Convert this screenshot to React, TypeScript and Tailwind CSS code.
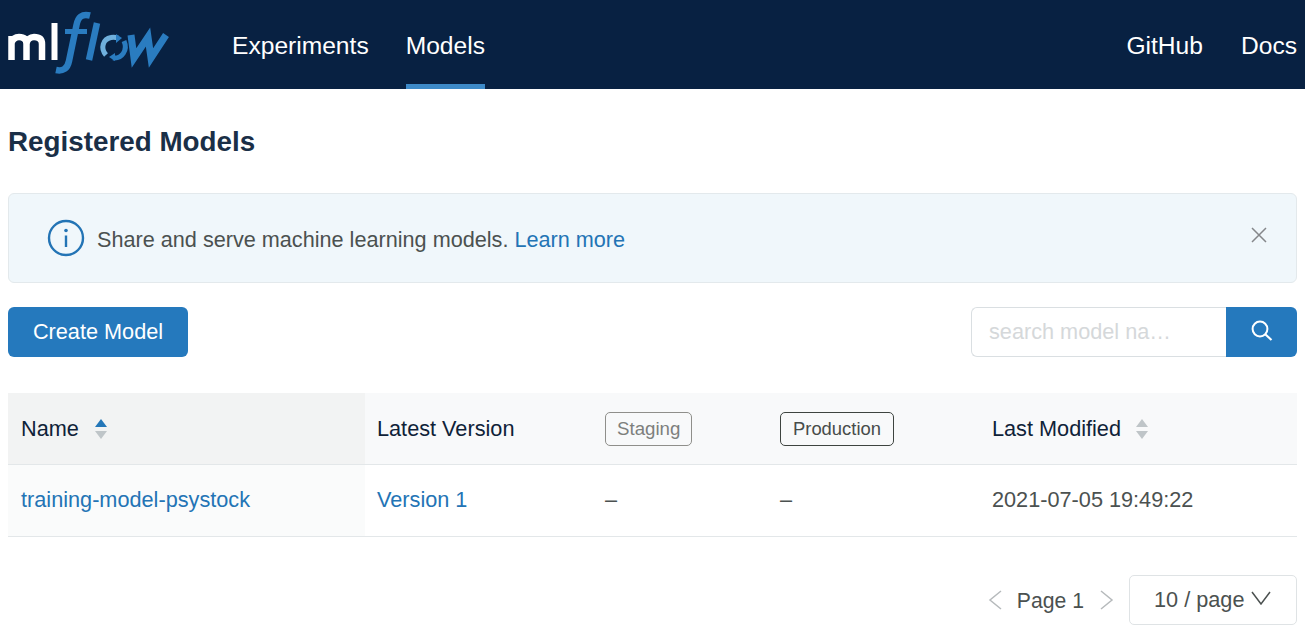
function Logo() {
  return (
    <svg width="172" height="80" viewBox="0 0 172 80" fill="none" className="block">
      {/* m */}
      <path d="M11.5 60V36M11.5 43C13 38.5 15.5 37 19 37C24 37 26.5 39.5 26.5 44V60M26.5 44C27 39.5 30.5 37 34 37C39.5 37 42 39.5 42 44V60" stroke="#fff" strokeWidth="6.5" />
      {/* l */}
      <path d="M54.5 23V60" stroke="#fff" strokeWidth="6" />
      {/* f */}
      <path d="M90 15.5C82 13.5 78 17 76.5 25L69 61C67.5 68.5 63 71.5 56 70" stroke="#2a7cc0" strokeWidth="6.5" />
      <path d="M65 31.5H87" stroke="#2a7cc0" strokeWidth="5" />
      {/* second l */}
      <path d="M97 23L89 60" stroke="#2a7cc0" strokeWidth="6.5" />
      {/* o */}
      <path d="M106 55C100 48 103 39 111 37.5C113 37 115 37 118 38" stroke="#6fb0dd" strokeWidth="5" />
      <path d="M116 34L122 38L116 43Z" fill="#2a7cc0" />
      <path d="M124 41C128 50 122 59 113 58" stroke="#2a7cc0" strokeWidth="5" />
      <path d="M115 53L109 57L115 61Z" fill="#2a7cc0" />
      {/* w */}
      <path d="M131 35L134 58L148 37L151 58L166 35" stroke="#2a7cc0" strokeWidth="7" />
    </svg>
  );
}

function SortArrows({ active }: { active?: boolean }) {
  return (
    <svg width="12" height="20" viewBox="0 0 12 20" className="block">
      <path d="M6 0L12 8H0Z" fill={active ? "#2477b8" : "#bfc5c8"} />
      <path d="M6 20L0 12H12Z" fill="#bfc5c8" />
    </svg>
  );
}

export default function App() {
  return (
    <div className="w-[1305px] h-[637px] overflow-hidden bg-white font-['Liberation_Sans',Arial,sans-serif] text-[21.7px] text-[#4b5150]">
      <header className="h-[89px] bg-[#082142] flex items-center pr-[8px]">
        <div className="w-[232px] h-[89px] shrink-0">
          <Logo />
        </div>
        <nav className="flex gap-[37px] h-full text-white text-[24.6px]">
          <a className="h-full flex items-center pt-[3px]">Experiments</a>
          <a className="h-full flex items-center pt-[8px] border-b-[5px] border-[#3d8ac8]">Models</a>
        </nav>
        <div className="ml-auto flex gap-[38px] text-white text-[24.6px] pt-[3px]">
          <a>GitHub</a>
          <a>Docs</a>
        </div>
      </header>

      <main className="px-[8px]">
        <h1 className="h-[104px] pt-[37px] text-[27.8px] leading-[32px] font-bold text-[#1a2f47]">Registered Models</h1>

        <div className="h-[90px] bg-[#f0f7fb] border border-[#e3e9ec] rounded-[6px] flex items-center pl-[38px] pr-[29px]">
          <svg width="38" height="38" viewBox="0 0 38 38" fill="none" className="shrink-0 mr-[12px]">
            <circle cx="19" cy="19" r="17" stroke="#2374b5" strokeWidth="2.4" />
            <circle cx="19" cy="11.5" r="1.8" fill="#2374b5" />
            <path d="M19 16.5V28" stroke="#2374b5" strokeWidth="2.4" />
          </svg>
          <span className="pt-[5px] text-[21.65px]">
            Share and serve machine learning models. <a className="text-[#2374b5]">Learn more</a>
          </span>
          <svg width="16" height="16" viewBox="0 0 16 16" fill="none" className="ml-auto mb-[6px]">
            <path d="M1 1L15 15M15 1L1 15" stroke="#85878a" strokeWidth="1.5" />
          </svg>
        </div>

        <div className="mt-[24px] h-[50px] flex items-center justify-between">
          <button className="w-[180px] h-[50px] rounded-[6px] bg-[#2579bd] text-white text-[21.7px]">Create Model</button>
          <div className="flex h-[50px]">
            <div className="w-[255px] border border-[#dadfe2] border-r-0 rounded-l-[6px] pl-[17px] flex items-center text-[#d5d8da]">
              search model na…
            </div>
            <div className="w-[71px] rounded-r-[6px] bg-[#2579bd] flex items-center justify-center pb-[3px]">
              <svg width="22" height="22" viewBox="0 0 22 22" fill="none">
                <circle cx="9" cy="9" r="7.4" stroke="#fff" strokeWidth="2" />
                <path d="M14.5 14.5L20.5 20" stroke="#fff" strokeWidth="2.2" />
              </svg>
            </div>
          </div>
        </div>

        <table className="mt-[36px] w-[1289px] table-fixed border-collapse">
          <colgroup>
            <col className="w-[357px]" />
            <col className="w-[228px]" />
            <col className="w-[174px]" />
            <col className="w-[212px]" />
            <col />
          </colgroup>
          <thead>
            <tr className="h-[71px] border-b border-[#e3e7e9] text-[#0f2238] text-left">
              <th className="font-normal px-[13px] pt-[2px] bg-[#f2f3f3]">
                <span className="flex items-center gap-[16px]">
                  Name
                  <SortArrows active />
                </span>
              </th>
              <th className="font-normal px-[12px] pt-[2px] bg-[#f8f9fa]">Latest Version</th>
              <th className="font-normal px-[12px] pt-[2px] bg-[#f8f9fa]">
                <span className="inline-flex items-center h-[34px] px-[11px] border border-[#8f8f8b] rounded-[5px] text-[18.7px] text-[#7d7f7d]">Staging</span>
              </th>
              <th className="font-normal pl-[13px] pr-[12px] pt-[2px] bg-[#f8f9fa]">
                <span className="inline-flex items-center h-[34px] px-[12px] border border-[#3e4440] rounded-[5px] text-[18.4px] text-[#474c4a]">Production</span>
              </th>
              <th className="font-normal px-[13px] pt-[2px] bg-[#f8f9fa]">
                <span className="flex items-center gap-[15px]">
                  Last Modified
                  <SortArrows />
                </span>
              </th>
            </tr>
          </thead>
          <tbody>
            <tr className="h-[72px] border-b border-[#e3e7e9]">
              <td className="px-[13px] bg-[#fafbfb] text-[#2374b5]">training-model-psystock</td>
              <td className="px-[12px] text-[#2374b5]">Version 1</td>
              <td className="px-[12px]">–</td>
              <td className="pl-[13px] pr-[12px]">–</td>
              <td className="px-[13px]">2021-07-05 19:49:22</td>
            </tr>
          </tbody>
        </table>

        <div className="mt-[38px] flex items-center justify-end">
          <svg width="14" height="20" viewBox="0 0 14 20" fill="none">
            <path d="M13 1L2 10L13 19" stroke="#b6babc" strokeWidth="1.5" />
          </svg>
          <span className="ml-[15px] pt-[2px] text-[21.2px]">Page 1</span>
          <svg width="14" height="20" viewBox="0 0 14 20" fill="none" className="ml-[16px]">
            <path d="M1 1L12 10L1 19" stroke="#b6babc" strokeWidth="1.5" />
          </svg>
          <div className="ml-[15px] w-[168px] h-[50px] border border-[#dfe3e5] rounded-[5px] pl-[24px] flex items-center gap-[7px]">
            <span className="pt-[2px]">10 / page</span>
            <svg width="20" height="14" viewBox="0 0 20 14" fill="none" className="mb-[4px]">
              <path d="M1 1L10 13L19 1" stroke="#4b5150" strokeWidth="1.5" />
            </svg>
          </div>
        </div>
      </main>
    </div>
  );
}
